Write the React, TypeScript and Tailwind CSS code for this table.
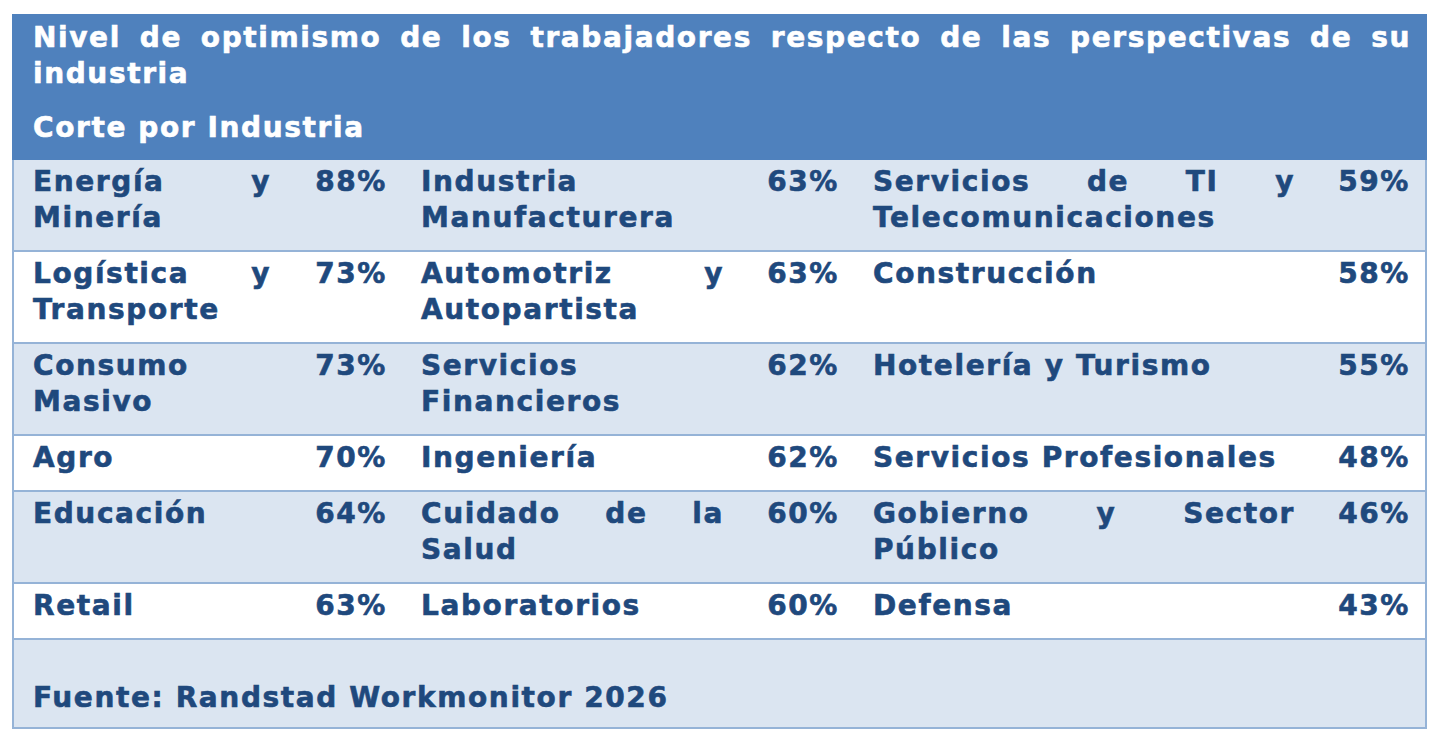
type Cell = { lines: string[]; pct: string };

const rows: { bg: string; h: string; cells: Cell[] }[] = [
  {
    bg: "bg-[#dbe5f1]",
    h: "h-[90px]",
    cells: [
      { lines: ["Energía y", "Minería"], pct: "88%" },
      { lines: ["Industria", "Manufacturera"], pct: "63%" },
      { lines: ["Servicios de TI y", "Telecomunicaciones"], pct: "59%" },
    ],
  },
  {
    bg: "bg-white",
    h: "h-[90px]",
    cells: [
      { lines: ["Logística y", "Transporte"], pct: "73%" },
      { lines: ["Automotriz y", "Autopartista"], pct: "63%" },
      { lines: ["Construcción"], pct: "58%" },
    ],
  },
  {
    bg: "bg-[#dbe5f1]",
    h: "h-[90px]",
    cells: [
      { lines: ["Consumo", "Masivo"], pct: "73%" },
      { lines: ["Servicios", "Financieros"], pct: "62%" },
      { lines: ["Hotelería y Turismo"], pct: "55%" },
    ],
  },
  {
    bg: "bg-white",
    h: "h-[54px]",
    cells: [
      { lines: ["Agro"], pct: "70%" },
      { lines: ["Ingeniería"], pct: "62%" },
      { lines: ["Servicios Profesionales"], pct: "48%" },
    ],
  },
  {
    bg: "bg-[#dbe5f1]",
    h: "h-[90px]",
    cells: [
      { lines: ["Educación"], pct: "64%" },
      { lines: ["Cuidado de la", "Salud"], pct: "60%" },
      { lines: ["Gobierno y Sector", "Público"], pct: "46%" },
    ],
  },
  {
    bg: "bg-white",
    h: "h-[54px]",
    cells: [
      { lines: ["Retail"], pct: "63%" },
      { lines: ["Laboratorios"], pct: "60%" },
      { lines: ["Defensa"], pct: "43%" },
    ],
  },
];

function Lines({ lines }: { lines: string[] }) {
  return (
    <>
      {lines.map((l, i) =>
        i < lines.length - 1 ? (
          <div key={i} className="whitespace-nowrap text-justify [text-align-last:justify]">
            {l}
          </div>
        ) : (
          <div key={i} className="whitespace-nowrap">
            {l}
          </div>
        )
      )}
    </>
  );
}

export default function App() {
  return (
    <main
      className="min-h-screen bg-white pl-[12px] pt-[14px] text-[28px] font-bold leading-[36px] tracking-[1.6px] [-webkit-text-stroke:0.6px]"
      style={{ fontFamily: '"DejaVu Sans", Verdana, sans-serif' }}
    >
      <div className="w-[1415px]">
        <header className="bg-[#4f81bd] pl-[21px] pr-[16px] pt-[6px] pb-[14px] text-white">
          <div className="mb-[18px]">
            <Lines
              lines={[
                "Nivel de optimismo de los trabajadores respecto de las perspectivas de su",
                "industria",
              ]}
            />
          </div>
          <div>Corte por Industria</div>
        </header>

        <div className="border-x-2 border-b-2 border-[#95b3d7] text-[#1f497d]">
          {rows.map((row, r) => (
            <div
              key={r}
              className={`grid grid-cols-[273px_115px_338px_114px_457px_114px] ${row.bg} ${
                r > 0 ? "border-t-2 border-[#95b3d7]" : ""
              }`}
            >
              {row.cells.map((c, i) => (
                <div key={i} className="contents">
                  <div className={`${row.h} pl-[19px] pr-[16px] pt-[4px]`}>
                    <Lines lines={c.lines} />
                  </div>
                  <div className={`${row.h} pr-[15px] pt-[4px] text-right`}>{c.pct}</div>
                </div>
              ))}
            </div>
          ))}
          <div className="h-[89px] border-t-2 border-[#95b3d7] bg-[#dbe5f1] pl-[19px] pt-[4px]">
            <div>&nbsp;</div>
            <div>Fuente: Randstad Workmonitor 2026</div>
          </div>
        </div>
      </div>
    </main>
  );
}
